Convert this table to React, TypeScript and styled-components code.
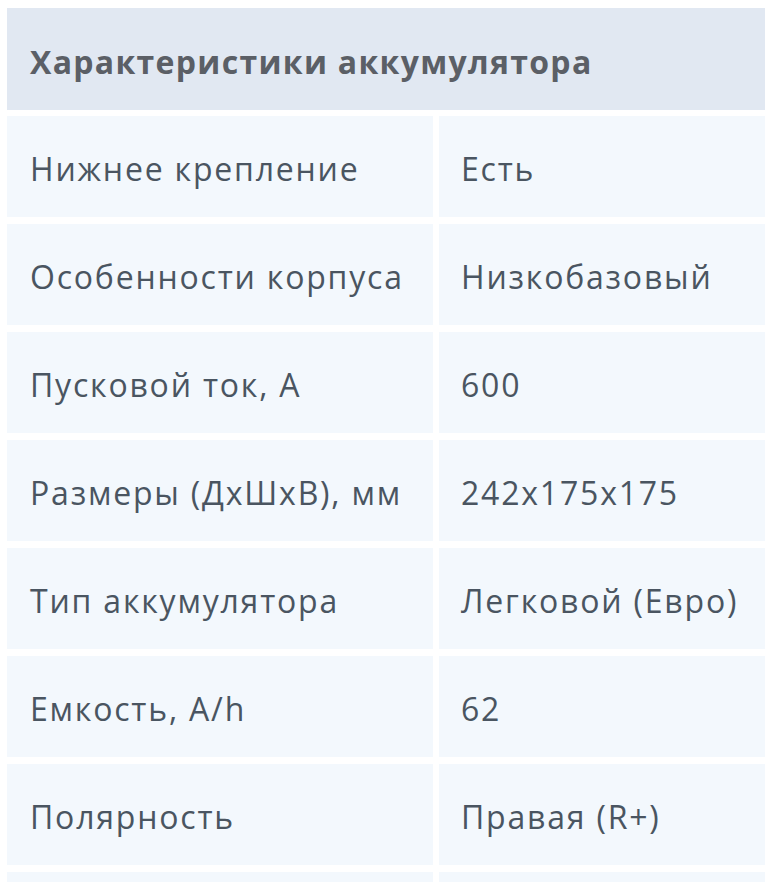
import React from 'react';
import styled, {createGlobalStyle} from "styled-components";

const rows: [string, string][] = [
    ["Нижнее крепление", "Есть"],
    ["Особенности корпуса", "Низкобазовый"],
    ["Пусковой ток, А", "600"],
    ["Размеры (ДхШхВ), мм", "242x175x175"],
    ["Тип аккумулятора", "Легковой (Евро)"],
    ["Емкость, A/h", "62"],
    ["Полярность", "Правая (R+)"],
];

const GlobalStyle = createGlobalStyle`
  body {
    margin: 0;
    background: #ffffff;
    font-family: "Open Sans", "Noto Sans", sans-serif;
    overflow: hidden;
  }
`

export default function App() {
    return (
        <>
            <GlobalStyle/>
            <Page>
                <Specs>
                    <Title>Характеристики аккумулятора</Title>
                    {rows.map(([name, value]) => (
                        <React.Fragment key={name}>
                            <Cell>{name}</Cell>
                            <Cell $value>{value}</Cell>
                        </React.Fragment>
                    ))}
                    {/* next row, only its top edge is in view */}
                    <Cell/>
                    <Cell $value/>
                </Specs>
            </Page>
        </>
    );
}

const Page = styled.div`
  padding: 8px 3px 0 7px;
  height: 882px;
  box-sizing: border-box;
  overflow: hidden;
`

const Specs = styled.div`
  display: grid;
  grid-template-columns: 426px 326px;
  grid-auto-rows: 101px;
  column-gap: 6px;
  row-gap: 7px;
`

const Title = styled.div`
  grid-column: 1 / -1;
  height: 102px;
  margin-bottom: -1px;
  display: flex;
  align-items: center;
  padding: 4px 0 0 23px;
  box-sizing: border-box;
  background-color: #e1e8f2;
  color: #5b5f66;
  font-size: 32px;
  font-weight: 700;
  letter-spacing: 1.3px;
`

const Cell = styled.div<{ $value?: boolean }>`
  display: flex;
  align-items: center;
  padding: 4px 0 0 ${p => p.$value ? 22 : 23}px;
  box-sizing: border-box;
  background-color: #f3f8fd;
  color: #4a5561;
  font-size: 32px;
  letter-spacing: 1.8px;
  white-space: nowrap;
`
